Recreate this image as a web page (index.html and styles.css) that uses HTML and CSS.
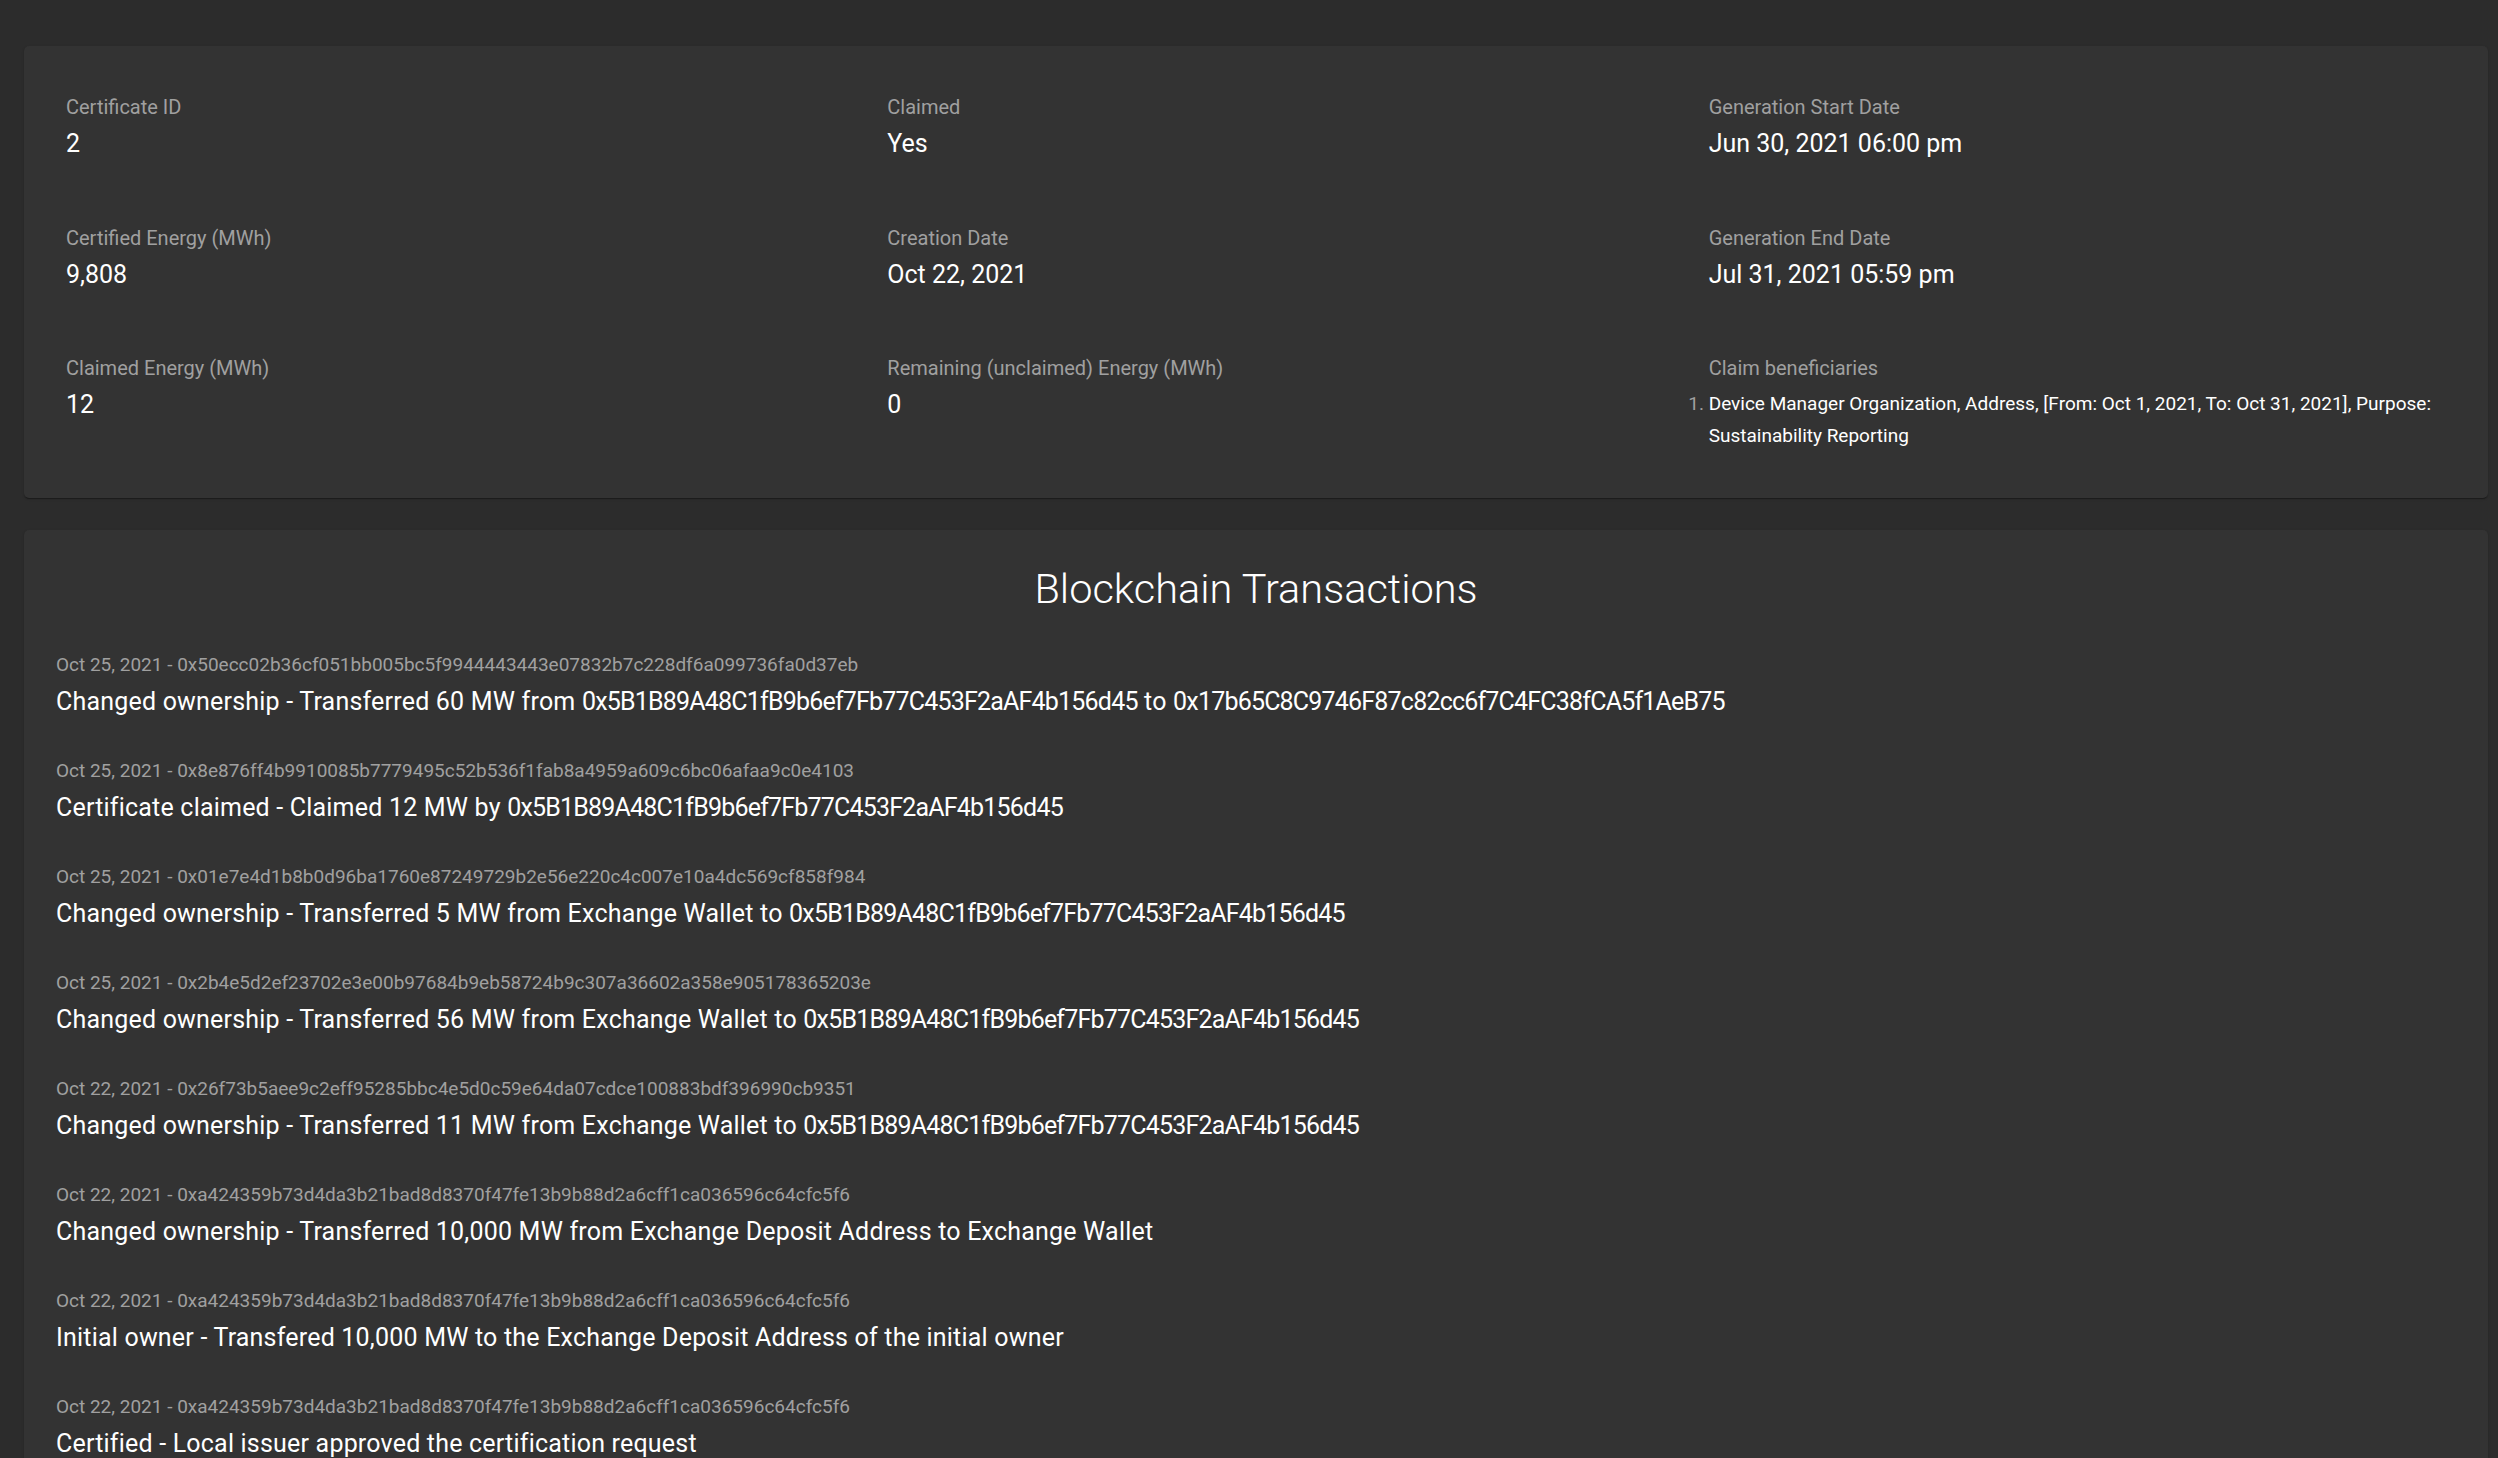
FILE: index.html
```html
<!DOCTYPE html>
<html lang="en">
<head>
<meta charset="utf-8">
<title>Certificate details</title>
<link rel="stylesheet" href="styles.css">
</head>
<body>
<main class="page">
  <section class="card details">
    <div class="field">
      <div class="label">Certificate ID</div>
      <div class="value">2</div>
    </div>
    <div class="field">
      <div class="label">Claimed</div>
      <div class="value">Yes</div>
    </div>
    <div class="field">
      <div class="label">Generation Start Date</div>
      <div class="value">Jun 30, 2021 06:00 pm</div>
    </div>
    <div class="field">
      <div class="label">Certified Energy (MWh)</div>
      <div class="value">9,808</div>
    </div>
    <div class="field">
      <div class="label">Creation Date</div>
      <div class="value">Oct 22, 2021</div>
    </div>
    <div class="field">
      <div class="label">Generation End Date</div>
      <div class="value">Jul 31, 2021 05:59 pm</div>
    </div>
    <div class="field">
      <div class="label">Claimed Energy (MWh)</div>
      <div class="value">12</div>
    </div>
    <div class="field">
      <div class="label">Remaining (unclaimed) Energy (MWh)</div>
      <div class="value">0</div>
    </div>
    <div class="field">
      <div class="label">Claim beneficiaries</div>
      <ol class="beneficiaries">
        <li>Device Manager Organization, Address, [From: Oct 1, 2021, To: Oct 31, 2021], Purpose: Sustainability Reporting</li>
      </ol>
    </div>
  </section>

  <section class="card transactions">
    <h2 class="title">Blockchain Transactions</h2>
    <ul class="tx-list">
      <li class="tx">
        <div class="tx-meta">Oct 25, 2021 - 0x50ecc02b36cf051bb005bc5f9944443443e07832b7c228df6a099736fa0d37eb</div>
        <div class="tx-text">Changed ownership - Transferred 60 MW from <span class="addr">0x5B1B89A48C1fB9b6ef7Fb77C453F2aAF4b156d45</span> to <span class="addr">0x17b65C8C9746F87c82cc6f7C4FC38fCA5f1AeB75</span></div>
      </li>
      <li class="tx">
        <div class="tx-meta">Oct 25, 2021 - 0x8e876ff4b9910085b7779495c52b536f1fab8a4959a609c6bc06afaa9c0e4103</div>
        <div class="tx-text">Certificate claimed - Claimed 12 MW by <span class="addr">0x5B1B89A48C1fB9b6ef7Fb77C453F2aAF4b156d45</span></div>
      </li>
      <li class="tx">
        <div class="tx-meta">Oct 25, 2021 - 0x01e7e4d1b8b0d96ba1760e87249729b2e56e220c4c007e10a4dc569cf858f984</div>
        <div class="tx-text">Changed ownership - Transferred 5 MW from Exchange Wallet to <span class="addr">0x5B1B89A48C1fB9b6ef7Fb77C453F2aAF4b156d45</span></div>
      </li>
      <li class="tx">
        <div class="tx-meta">Oct 25, 2021 - 0x2b4e5d2ef23702e3e00b97684b9eb58724b9c307a36602a358e905178365203e</div>
        <div class="tx-text">Changed ownership - Transferred 56 MW from Exchange Wallet to <span class="addr">0x5B1B89A48C1fB9b6ef7Fb77C453F2aAF4b156d45</span></div>
      </li>
      <li class="tx">
        <div class="tx-meta">Oct 22, 2021 - 0x26f73b5aee9c2eff95285bbc4e5d0c59e64da07cdce100883bdf396990cb9351</div>
        <div class="tx-text">Changed ownership - Transferred 11 MW from Exchange Wallet to <span class="addr">0x5B1B89A48C1fB9b6ef7Fb77C453F2aAF4b156d45</span></div>
      </li>
      <li class="tx">
        <div class="tx-meta">Oct 22, 2021 - 0xa424359b73d4da3b21bad8d8370f47fe13b9b88d2a6cff1ca036596c64cfc5f6</div>
        <div class="tx-text">Changed ownership - Transferred 10,000 MW from Exchange Deposit Address to Exchange Wallet</div>
      </li>
      <li class="tx">
        <div class="tx-meta">Oct 22, 2021 - 0xa424359b73d4da3b21bad8d8370f47fe13b9b88d2a6cff1ca036596c64cfc5f6</div>
        <div class="tx-text">Initial owner - Transfered 10,000 MW to the Exchange Deposit Address of the initial owner</div>
      </li>
      <li class="tx">
        <div class="tx-meta">Oct 22, 2021 - 0xa424359b73d4da3b21bad8d8370f47fe13b9b88d2a6cff1ca036596c64cfc5f6</div>
        <div class="tx-text">Certified - Local issuer approved the certification request</div>
      </li>
    </ul>
  </section>
</main>
</body>
</html>
```

FILE: styles.css
```css
html, body {
  margin: 0;
  padding: 0;
  background: #2c2c2c;
  color: #ffffff;
  font-family: Roboto, "Noto Sans", "Liberation Sans", sans-serif;
}

.page {
  padding: 46px 10px 0 24px;
  display: flex;
  flex-direction: column;
  gap: 32px;
}

.card {
  background: #333333;
  border-radius: 5px;
  box-shadow: 0 2px 1px -1px rgba(0, 0, 0, 0.2), 0 1px 1px 0 rgba(0, 0, 0, 0.14), 0 1px 3px 0 rgba(0, 0, 0, 0.12);
}

.details {
  display: grid;
  grid-template-columns: repeat(3, 1fr);
  row-gap: 66.5px;
  padding: 49px 0 46px;
}

.field {
  padding: 0 24px 0 42px;
  min-width: 0;
}

.label {
  font-size: 20px;
  line-height: 24px;
  color: #a0a0a0;
  margin-bottom: 10px;
}

.value {
  font-size: 25px;
  line-height: 30px;
  color: #ffffff;
}

.beneficiaries {
  margin: -2px 0 0;
  padding: 0;
  list-style: decimal outside;
  font-size: 19px;
  line-height: 32px;
  color: #ffffff;
}

.beneficiaries li::marker {
  color: #a0a0a0;
}

.transactions {
  padding: 35px 32px 40px;
}

.title {
  margin: 0 0 41px;
  text-align: center;
  font-size: 41.5px;
  line-height: 48px;
  font-weight: 300;
  color: #ffffff;
}

.tx-list {
  list-style: none;
  margin: 0;
  padding: 0;
  display: flex;
  flex-direction: column;
  gap: 43px;
}

.tx-meta {
  font-size: 19px;
  line-height: 22px;
  color: #a0a0a0;
  margin-bottom: 11px;
}

.tx-text {
  font-size: 25px;
  line-height: 30px;
  letter-spacing: 0.2px;
  color: #ffffff;
}

.addr {
  letter-spacing: -0.8px;
}
```
